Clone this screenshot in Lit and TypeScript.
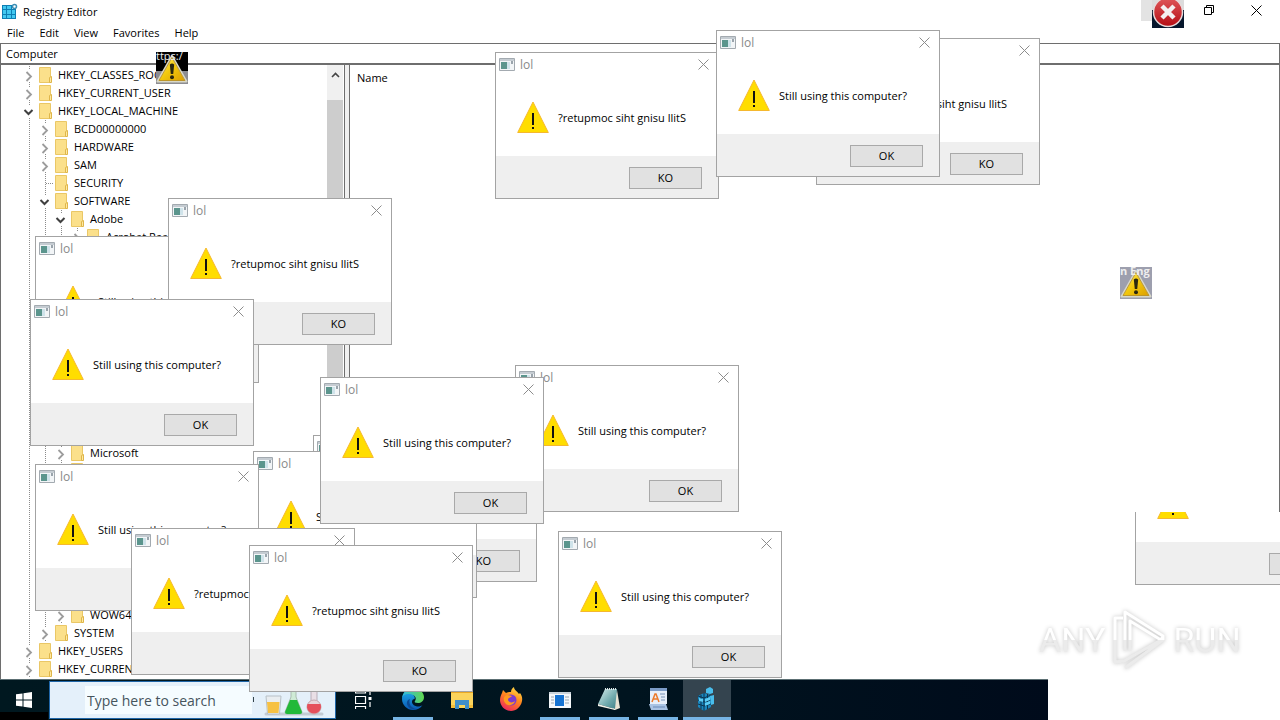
import { LitElement, html, svg, css, nothing } from "lit";
import { customElement, property } from "lit/decorators.js";

const FONT = css`"Segoe UI", "Open Sans", "Noto Sans", sans-serif`;

const cross = (size: number) => html`
  <svg width=${size} height=${size} viewBox="0 0 11 11" aria-hidden="true">
    <path d="M.5 .5 10.5 10.5M10.5 .5 .5 10.5" stroke="currentColor" fill="none" />
  </svg>`;

const glossyWarning = html`
  <svg width="32" height="30" viewBox="0 0 32 30" aria-hidden="true">
    <defs>
      <linearGradient id="gold" x1="0" y1="0" x2="1" y2="1">
        <stop offset="0" stop-color="#fff27a" />
        <stop offset=".5" stop-color="#f2c80c" />
        <stop offset="1" stop-color="#d99a00" />
      </linearGradient>
    </defs>
    <path d="M16 2 30.500 27.500H1.500Z" fill="url(#gold)" stroke="#d8d8c8" stroke-width="2" stroke-linejoin="round" />
    <path d="M16 3.500 29 26.500H3Z" fill="none" stroke="#b58a1a" stroke-width=".8" />
    <path d="M13.800 10.500q2.200-2 4.400 0L17.200 20h-2.400Z" fill="#2a2710" />
    <circle cx="16" cy="23.200" r="2" fill="#2a2710" />
  </svg>`;

@customElement("message-box")
export class MessageBox extends LitElement {
  @property({ type: Boolean }) flipped = false;

  static styles = css`
    :host {
      box-sizing: border-box;
      display: flex;
      flex-direction: column;
      flex: none;
      width: 224px;
      border: 1px solid #a3a3a3;
      background: #fff;
      font: 11px/16px ${FONT};
      color: #000;
    }
    .title {
      display: flex;
      align-items: center;
      gap: 5px;
      height: 24px;
      padding: 0 9px 0 3px;
      color: #8a8a8a;
      font-size: 12px;
    }
    .name { flex: 1; }
    .close {
      display: grid;
      padding: 0 0 1px;
      border: 0;
      background: none;
      color: #8c8c8c;
    }
    .body {
      display: flex;
      align-items: center;
      gap: 9px;
      height: 79px;
      padding-left: 21px;
      white-space: nowrap;
    }
    .message { padding-top: 2px; }
    .footer {
      display: flex;
      justify-content: flex-end;
      padding: 11px 16px 9px 0;
      background: #efefef;
    }
    .answer {
      box-sizing: border-box;
      width: 73px;
      height: 22px;
      padding: 0;
      border: 1px solid #a9a9a9;
      background: #e1e1e1;
      color: #000;
      font: inherit;
    }
  `;

  render() {
    return html`
      <div class="title">
        <svg width="16" height="14" viewBox="0 0 16 14" aria-hidden="true">
          <path d="M.5 .500h15v12H.500z" fill="#f2f5f7" stroke="#a3aab0" />
          <path d="M1 1h14v2H1z" fill="#c5ccd2" />
          <path d="M2 4h6v7H2z" fill="#5b958d" />
          <path d="M8 4h3v7H8z" fill="#cfe3ea" />
          <path d="M12 3h2v3h-2z" fill="#9aa4ac" />
        </svg>
        <span class="name">lol</span>
        <button class="close" aria-label="Close">${cross(11)}</button>
      </div>
      <div class="body">
        <svg width="32" height="32" viewBox="0 0 32 32" aria-hidden="true">
          <path d="M16 1 31.300 31.500H.700Z" fill="#fd0" stroke="#f5b82e" stroke-linejoin="round" />
          <path d="M15 12h2v12h-2zM15 26h2v2h-2z" fill="#111" />
        </svg>
        <span class="message">${this.flipped ? "?retupmoc siht gnisu llitS" : "Still using this computer?"}</span>
      </div>
      <div class="footer">
        <button class="answer">${this.flipped ? "KO" : "OK"}</button>
      </div>`;
  }
}

type Row = { level: number; label?: string; state?: "open" | "closed" | "leaf"; span?: number };

const ROWS: Row[] = [
  { level: 0, label: "HKEY_CLASSES_ROOT", state: "closed" },
  { level: 0, label: "HKEY_CURRENT_USER", state: "closed" },
  { level: 0, label: "HKEY_LOCAL_MACHINE", state: "open" },
  { level: 1, label: "BCD00000000", state: "closed" },
  { level: 1, label: "HARDWARE", state: "closed" },
  { level: 1, label: "SAM", state: "closed" },
  { level: 1, label: "SECURITY", state: "leaf" },
  { level: 1, label: "SOFTWARE", state: "open" },
  { level: 2, label: "Adobe", state: "open" },
  { level: 3, label: "Acrobat Reader", state: "closed" },
  { level: 2, span: 11 },
  { level: 2, label: "Microsoft", state: "closed" },
  { level: 2, label: "", state: "closed" },
  { level: 2, span: 7 },
  { level: 2, label: "WOW6432Node", state: "closed" },
  { level: 1, label: "SYSTEM", state: "closed" },
  { level: 0, label: "HKEY_USERS", state: "closed" },
  { level: 0, label: "HKEY_CURRENT_CONFIG", state: "closed" },
];

const BOXES: { x: number; y: number; flipped?: boolean }[] = [
  { x: 35, y: 236 },
  { x: 168, y: 198, flipped: true },
  { x: 30, y: 299 },
  { x: 313, y: 435, flipped: true },
  { x: 253, y: 451 },
  { x: 515, y: 365 },
  { x: 320, y: 377 },
  { x: 35, y: 464 },
  { x: 131, y: 528, flipped: true },
  { x: 249, y: 545, flipped: true },
  { x: 558, y: 531 },
  { x: 495, y: 52, flipped: true },
  { x: 816, y: 38, flipped: true },
  { x: 716, y: 30 },
];

const edge = svg`
  <defs>
    <linearGradient id="eg" x1="0" y1="0" x2="1" y2="0"><stop offset="0" stop-color="#2fb8e6"/><stop offset="1" stop-color="#62d84e"/></linearGradient>
    <linearGradient id="eb" x1="0" y1="0" x2="0" y2="1"><stop offset="0" stop-color="#1b9de2"/><stop offset="1" stop-color="#0a57b0"/></linearGradient>
  </defs>
  <path d="M1 11C2 4 7 1 12 1c7 0 11 5 11 9 0 4-3 6-6 6-3 0-4-1-3-2 2-3 0-6-4-6-5 0-8 2-9 3Z" fill="url(#eg)"/>
  <path d="M1 12C1 8 5 6.500 9 7c4 .4 5.500 3 4.500 5-3 0-4 5 1 7 3 1 5 .5 7-1-2 3.500-5.500 5-9.500 5C6 23 1 18 1 12Z" fill="url(#eb)"/>
  <path d="M9 12c-2 4 1 9 6 10-5 1.500-10-3-9-7 .3-1.500 1.500-2.600 3-3Z" fill="#0c4a94"/>`;

const explorer = svg`
  <path d="M1 2h8l2 2h12v17H1z" fill="#e9a823"/>
  <path d="M1 6h22v15H1z" fill="#fbd45c"/>
  <path d="M5 22v-9h14v9h-4v-4H9v4z" fill="#3f8fcb"/>
  <path d="M1 18h4v3H1zM19 18h4v3h-4z" fill="#f4bd38"/>`;

const firefox = svg`
  <defs>
    <linearGradient id="ff" x1=".8" y1="0" x2=".3" y2="1"><stop offset="0" stop-color="#ffe14a"/><stop offset=".45" stop-color="#ff8a1e"/><stop offset="1" stop-color="#f0275c"/></linearGradient>
  </defs>
  <path d="M3 6 4 3l3 3c2-1 3-1 5-1 0-2 1-4 3-5 0 3 3 4 5 7l1-1c2 3 2.500 5 2 8-1 6-6 10-11 10C6 24 1 19 1 13c0-3 1-5 2-7Z" fill="url(#ff)"/>
  <circle cx="12" cy="13" r="5.500" fill="#7c3bd0"/>
  <path d="M6 9c3-2 5 0 7 0-1 2-4 1-4 4 1 3 5 3 7 1-1 5-9 6-11 0-.6-2 0-4 1-5Z" fill="#ff9b1f"/>`;

const program = svg`
  <path d="M1 5h22v16H1z" fill="#f4f7f9"/>
  <path d="M1 5h22v2H1z" fill="#c9d3da"/>
  <path d="M7 8h9v11H7z" fill="#1673d1"/>
  <path d="M3 10h3M3 13h3M3 16h3M17 10h4M17 13h4M17 16h4" stroke="#98a6b0"/>`;

const notepad = svg`
  <defs><linearGradient id="np" x1="0" y1="0" x2="1" y2="1"><stop offset="0" stop-color="#d8eeee"/><stop offset=".6" stop-color="#6fa9ac"/><stop offset="1" stop-color="#3f7f86"/></linearGradient></defs>
  <path d="m20 3 3 18-5 2-3-2z" fill="#e8e3d3"/>
  <path d="M8 2h12l-2 20L1 17Z" fill="url(#np)"/>
  <path d="M8 2h12" stroke="#dfe7e8" stroke-width="2" stroke-dasharray="1 1"/>
  <path d="m1 17 17 5v1L1 19z" fill="#f3f3ea"/>`;

const wordpad = svg`
  <path d="M4 1h17v16H4z" fill="#e7effa"/>
  <path d="M4 1h17v3H4z" fill="#7c9cc8"/>
  <path d="M3 17h17l2 6H5z" fill="#a9c3e4"/>
  <path d="m6 15 3-8h1l3 8M7.500 12h4.500" stroke="#ec7a2b" stroke-width="1.500" fill="none"/>
  <path d="M14 7h5M15 10h4M15 13h4" stroke="#7a94b8"/>
  <path d="M7 20h12" stroke="#6a8ab8"/>`;

const registry = svg`
  <path d="M3 9l6-3 7 2v12l-7 4-6-4z" fill="#1a86bd"/>
  <path d="M9 6v18M3 13l6 2 7-2M3 17l6 2 7-2M3 9l6 2 7-3M6 8v14M12.500 7v15" stroke="#0b3550" fill="none"/>
  <path d="M10 12l5-2v3l-5 2zM10 16l5-2v3l-5 2zM4 11l4 1v3l-4-1z" fill="#5ccdf5"/>
  <path d="M11 2l4-2 3 2v4l-3 1-4-1zM15 9l4-1v9l-3 1z" fill="#49bdec"/>`;

const TASKS = [
  { name: "Microsoft Edge", art: edge, run: true },
  { name: "File Explorer", art: explorer },
  { name: "Firefox", art: firefox },
  { name: "Program", art: program, run: true },
  { name: "Notepad", art: notepad, run: true },
  { name: "WordPad", art: wordpad, run: true },
  { name: "Registry Editor", art: registry, active: true },
];

@customElement("app-root")
export class AppRoot extends LitElement {
  static styles = css`
    :host {
      position: relative;
      display: flex;
      flex-direction: column;
      height: 100vh;
      overflow: hidden;
      background: #fff;
      color: #000;
      font: 11px/18px ${FONT};
    }
    button {
      padding: 0;
      border: 0;
      background: none;
      color: inherit;
      font: inherit;
    }
    .editor {
      flex: 1;
      min-height: 0;
      display: flex;
      flex-direction: column;
    }
    .titlebar {
      display: flex;
      gap: 5px;
      height: 23px;
      padding-left: 2px;
    }
    .logo { margin-top: 3px; }
    .caption { flex: 1; line-height: 24px; }
    .controls { display: flex; height: 21px; }
    .control {
      display: grid;
      place-items: center;
      width: 46px;
      height: 21px;
    }
    .hovered { width: 43px; margin-right: 2px; background: #e3e3e3; }
    .last { width: 48px; }
    .menu {
      display: flex;
      gap: 15px;
      height: 20px;
      padding-left: 7px;
    }
    .address {
      box-sizing: border-box;
      height: 22px;
      border: 1px solid #6e6e6e;
      border-bottom-width: 2px;
      padding: 0 5px;
      background: #fff;
      color: #000;
      font: inherit;
      border-radius: 0;
      width: 100%;
    }
    .panes {
      flex: 1;
      min-height: 0;
      display: flex;
    }
    .tree {
      box-sizing: border-box;
      display: flex;
      width: 345px;
      border: solid #6e6e6e;
      border-width: 0 1px;
      padding-right: 1px;
      overflow: hidden;
    }
    .rows {
      flex: 1;
      min-width: 0;
      padding: 1px 0 0 20px;
    }
    .row {
      display: flex;
      height: 18px;
      white-space: nowrap;
    }
    .guide {
      flex: none;
      width: 16px;
      background: repeating-linear-gradient(#8b8b8b 0 1px, transparent 1px 2px) 8px 0 / 1px 100% no-repeat;
    }
    .twig { display: grid; place-items: center; }
    .folder { flex: none; margin: 1px 6px 0 2px; }
    .scroll {
      width: 16px;
      display: flex;
      flex-direction: column;
      background: #f0f0f0;
    }
    .up { display: grid; place-items: center; height: 20px; }
    .thumb { flex: 1; margin-top: 15px; background: #cdcdcd; }
    .splitter { width: 4px; background: #f0f0f0; }
    .list {
      flex: 1;
      border: solid #6e6e6e;
      border-width: 0 1px;
      padding: 4px 7px;
    }
    .taskbar {
      box-sizing: border-box;
      display: flex;
      width: 81.875%;
      height: 41px;
      border-top: 1px solid #5c6f73;
      background: linear-gradient(90deg, #001820, #00141f 60%, #000b1b);
      overflow: hidden;
    }
    .start {
      display: grid;
      place-items: center;
      width: 48px;
      background: linear-gradient(transparent 32px, #000 32px);
    }
    .search {
      box-sizing: border-box;
      display: flex;
      align-items: center;
      width: 287px;
      margin: 1px 3px 1px 1px;
      border: 1px solid #1f66a8;
      padding: 0 3px 0 35px;
      background: #e4f0fa;
    }
    .query {
      flex: 1;
      min-width: 0;
      height: 28px;
      padding: 0 2px;
      border: 0;
      background: #f5fcff;
      font: 14px/20px ${FONT};
    }
    .query::placeholder { color: #46555d; opacity: 1; }
    .tasks { display: flex; gap: 1px; }
    .task {
      box-sizing: border-box;
      display: grid;
      place-items: center;
      width: 48px;
      border-bottom: 3px solid transparent;
    }
    .view { margin-right: 1px; padding-left: 2px; }
    .run {
      background: linear-gradient(#76b4e4, #76b4e4) center bottom / 40px 3px no-repeat;
      background-origin: border-box;
      background-clip: border-box;
    }
    .active { border-color: #76b4e4; background: #34444f; }
    .placed { position: absolute; }
    .stamp {
      box-sizing: border-box;
      width: 32px;
      height: 32px;
      overflow: hidden;
      display: flex;
      flex-direction: column;
      justify-content: flex-end;
    }
    .stamp svg { flex: none; }
    .scrap {
      position: absolute;
      top: 0;
      left: 0;
      line-height: 8px;
      color: #eee;
      white-space: nowrap;
    }
    .night { top: 52px; left: 156px; background: linear-gradient(#000 58%, #8d8d92 58%); }
    .dusk { top: 267px; left: 1120px; background: #9d9fae; }
    .bold { font-weight: 700; }
    .stop { top: 0; left: 1152px; height: 28px; background: #06162c; }
    .remnant {
      top: 512px;
      left: 1135px;
      right: 0;
      bottom: 0;
      background: #fff;
    }
    .crop {
      display: flex;
      align-items: flex-end;
      height: 73px;
      overflow: hidden;
    }
    .watermark {
      top: 608px;
      left: 1039px;
      display: flex;
      align-items: center;
      gap: 6px;
      font: 34px/64px "Liberation Sans Narrow", Roboto, sans-serif;
    }
    .word {
      color: transparent;
      background: linear-gradient(#fff 50%, #ebebeb 50%);
      background-clip: text;
      -webkit-background-clip: text;
      filter: drop-shadow(0 0 2px #c4c4c4);
    }
    .play { filter: drop-shadow(0 0 2px #c4c4c4); }
  `;

  private row(r: Row) {
    const guides = Array.from({ length: r.level }, () => html`<span class="guide"></span>`);
    if (r.span) {
      return html`<div class="row" style="height:${r.span * 18}px">${guides}</div>`;
    }
    return html`
      <div class="row" role="treeitem">
        ${guides}
        <span class="guide twig">
          <svg width="16" height="18" viewBox="0 0 16 18" aria-hidden="true">
            ${r.state === "leaf"
              ? svg`<path d="M9 9.500h7" stroke="#8b8b8b" stroke-dasharray="1 1" />`
              : svg`<path d="M3 3h11v13H3z" fill="#fff" />`}
            ${r.state === "closed"
              ? svg`<path d="m5.500 6 4.500 4.500-4.500 4.500" fill="none" stroke="#9c9c9c" stroke-width="1.800" />`
              : nothing}
            ${r.state === "open"
              ? svg`<path d="m3.500 8 4 4 4-4" fill="none" stroke="#404040" stroke-width="2" />`
              : nothing}
          </svg>
        </span>
        <svg class="folder" width="13" height="16" viewBox="0 0 13 16" aria-hidden="true">
          <path d="M.5 .5h11v15H.500z" fill="#fbe08b" stroke="#eac766" />
          <path d="M12.500 9.500v6h-2v-5z" fill="#ffe9a2" stroke="#dfb64a" />
        </svg>
        <span>${r.label}</span>
      </div>`;
  }

  render() {
    return html`
      <main class="editor">
        <header class="titlebar">
          <svg class="logo" width="16" height="17" viewBox="0 0 16 17" aria-hidden="true">
            <path d="M0 2h10v4h4v10H0z" fill="#0e7fb4" />
            <path d="M1 3h3v3H1zM5 3h4v3H5zM1 7h3v4H1zM5 7h4v4H5zM10 7h3v4h-3zM1 12h3v3H1zM5 12h4v3H5zM10 12h3v3h-3z" fill="#42c8f0" />
            <circle cx="12.500" cy="3.500" r="2" fill="none" stroke="#3d8fb5" stroke-width="1.500" />
          </svg>
          <span class="caption">Registry Editor</span>
          <div class="controls">
            <button class="control hovered" aria-label="Minimize"></button>
            <button class="control" aria-label="Restore">
              <svg width="11" height="11" viewBox="0 0 11 11" aria-hidden="true">
                <path d="M.5 2.500h7v7h-7zM2.500 2.500v-2h7v7h-2" fill="none" stroke="#000" />
              </svg>
            </button>
            <button class="control last" aria-label="Close">${cross(11)}</button>
          </div>
        </header>
        <nav class="menu">
          ${["File", "Edit", "View", "Favorites", "Help"].map((m) => html`<button>${m}</button>`)}
        </nav>
        <input class="address" aria-label="Address" .value=${"Computer"} />
        <div class="panes">
          <section class="tree">
            <div class="rows" role="tree">${ROWS.map((r) => this.row(r))}</div>
            <div class="scroll">
              <button class="up" aria-label="Scroll up">
                <svg width="9" height="6" viewBox="0 0 9 6" aria-hidden="true">
                  <path d="m1 5 3.500-3.500L8 5" fill="none" stroke="#444" stroke-width="1.600" />
                </svg>
              </button>
              <div class="thumb"></div>
            </div>
          </section>
          <div class="splitter"></div>
          <section class="list">Name</section>
        </div>
      </main>
      <footer class="taskbar">
        <button class="start" aria-label="Start">
          <svg width="16" height="16" viewBox="0 0 16 16" aria-hidden="true">
            <path d="M0 2.300 6.500 1.400V7.500H0zM7.500 1.200 16 0v7.500H7.500zM0 8.500h6.500v6.100L0 13.700zM7.500 8.500H16V16l-8.500-1.200z" fill="#fff" />
          </svg>
        </button>
        <div class="search">
          <input class="query" type="search" aria-label="Search" placeholder="Type here to search" />
          <svg width="80" height="34" viewBox="0 0 80 34" aria-hidden="true">
            <path d="M1.500 14v5" stroke="#33424a" />
            <path d="M14 31h56" stroke="#c3ccd5" stroke-width="3" stroke-linecap="round" />
            <path d="M14 13h15l-1.500 18h-12z" fill="#e9edf0" stroke="#b8c0c6" />
            <path d="M15 19h12.500l-1 11h-10.500z" fill="#f6c143" />
            <path d="M39 5h5v9l6 15q0 2-2 2H35q-2 0-2-2l6-15z" fill="#cfeBd6" stroke="#a9bcb0" />
            <path d="M38 17h7l5 12q0 2-2 2H35q-2 0-2-2z" fill="#22b93a" />
            <path d="M59 5h6v14h-6z" fill="#e9dfe6" stroke="#b9adb8" />
            <circle cx="62" cy="24" r="7" fill="#e8d5da" stroke="#c4a9b0" />
            <path d="M55.500 21h13a7 7 0 1 1-13 0z" fill="#e5505b" />
          </svg>
        </div>
        <div class="tasks">
          <button class="task view" aria-label="Task view">
            <svg width="18" height="20" viewBox="0 0 18 20" aria-hidden="true">
              <path d="M.5 0v4h10V0M.500 7.500h10v7H.500zM.500 20v-2.500h10V20M15 3v3M15 13v5" fill="none" stroke="#fff" stroke-width="1.200" />
              <path d="M13.500 8h3v3h-3z" fill="#fff" />
            </svg>
          </button>
          ${TASKS.map(
            (t) => html`
              <button class="task ${t.run ? "run" : ""} ${t.active ? "active" : ""}" aria-label=${t.name}>
                <svg width="24" height="24" viewBox="0 0 24 24" aria-hidden="true">${t.art}</svg>
              </button>`
          )}
        </div>
      </footer>

      <div class="placed remnant">
        <div class="crop"><message-box></message-box></div>
      </div>
      ${BOXES.map(
        (b) => html`<message-box class="placed" style="left:${b.x}px;top:${b.y}px" ?flipped=${b.flipped}></message-box>`
      )}
      <div class="placed stamp night"><span class="scrap">ttps:/</span>${glossyWarning}</div>
      <div class="placed stamp dusk"><span class="scrap bold">n Eng</span>${glossyWarning}</div>
      <div class="placed stamp stop">
        <svg width="32" height="28" viewBox="0 0 32 28" aria-hidden="true">
          <defs>
            <linearGradient id="red" x1="0" y1="0" x2="0" y2="1">
              <stop offset="0" stop-color="#e0585a" />
              <stop offset="1" stop-color="#b50d14" />
            </linearGradient>
          </defs>
          <path d="M0 0h32v10H0z" fill="#dcdcdc" />
          <circle cx="16" cy="12" r="14.500" fill="url(#red)" stroke="#e6dada" stroke-width="1.500" />
          <path d="m10 6 12 12M22 6 10 18" stroke="#f4f0f0" stroke-width="4.500" />
        </svg>
      </div>
      <div class="placed watermark">
        <span class="word">ANY</span>
        <svg class="play" width="56" height="64" viewBox="0 0 56 64" aria-hidden="true">
          <defs>
            <linearGradient id="pale" gradientUnits="userSpaceOnUse" x1="0" y1="0" x2="0" y2="64">
              <stop offset=".5" stop-color="#fff" />
              <stop offset=".5" stop-color="#ebebeb" />
            </linearGradient>
          </defs>
          <path d="M14 43V4l38 24v4L14 60M14 4l38 24-2 4L19 13v30M12 10H4v44l9-1 37-21" fill="none" stroke="url(#pale)" stroke-width="3" stroke-linejoin="round" />
        </svg>
        <span class="word">RUN</span>
      </div>`;
  }
}
